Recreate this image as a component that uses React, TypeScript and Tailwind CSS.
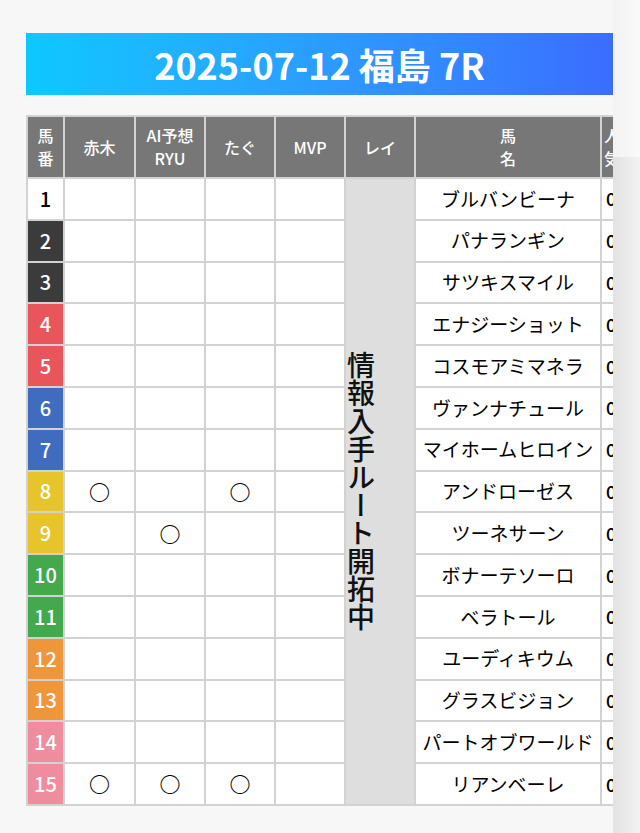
import type { ReactNode } from 'react';

type Horse = {
  no: number;
  name: string;
  akagi?: boolean;
  ryu?: boolean;
  tagu?: boolean;
};

const horses: Horse[] = [
  { no: 1, name: 'ブルバンビーナ' },
  { no: 2, name: 'パナランギン' },
  { no: 3, name: 'サツキスマイル' },
  { no: 4, name: 'エナジーショット' },
  { no: 5, name: 'コスモアミマネラ' },
  { no: 6, name: 'ヴァンナチュール' },
  { no: 7, name: 'マイホームヒロイン' },
  { no: 8, name: 'アンドローゼス', akagi: true, tagu: true },
  { no: 9, name: 'ツーネサーン', ryu: true },
  { no: 10, name: 'ボナーテソーロ' },
  { no: 11, name: 'ベラトール' },
  { no: 12, name: 'ユーディキウム' },
  { no: 13, name: 'グラスビジョン' },
  { no: 14, name: 'パートオブワールド' },
  { no: 15, name: 'リアンベーレ', akagi: true, ryu: true, tagu: true },
];

// 枠番の色 (1枠〜8枠)
function frameClass(no: number): string {
  if (no === 1) return 'bg-white text-black';
  if (no <= 3) return 'bg-[#3b3b3b] text-white';
  if (no <= 5) return 'bg-[#e8555a] text-white';
  if (no <= 7) return 'bg-[#3f6cbf] text-white';
  if (no <= 9) return 'bg-[#e8c42c] text-white';
  if (no <= 11) return 'bg-[#44a94c] text-white';
  if (no <= 13) return 'bg-[#ef953a] text-white';
  return 'bg-[#ef8c9d] text-white';
}

const th = 'border-2 border-[#d2d2d2] bg-[#777777] px-0 text-center align-middle text-[16px] font-medium leading-[23px] text-white';
const td = 'border-2 border-[#d2d2d2] bg-white p-0 text-center align-middle text-[18px] text-black';

function Mark({ on }: { on?: boolean }): ReactNode {
  return on ? <span className="text-[21px] font-bold">○</span> : null;
}

export default function App(): ReactNode {
  return (
    <div className="flex min-h-[833px] bg-[#f7f7f7] font-['Noto_Sans_CJK_JP','Noto_Sans',sans-serif]">
      <div className="w-[613px] shrink-0 pl-[26px] pt-[33px]">
        <h1 className="flex h-[62px] items-center justify-center bg-gradient-to-r from-[#0cc8ff] to-[#3b6cff] text-[36px] font-semibold text-white">
          2025-07-12 福島 7R
        </h1>
        <div className="mt-[20px] w-[587px] overflow-hidden">
          <table className="w-[644px] table-fixed border-collapse">
            <colgroup>
              <col className="w-[37px]" />
              <col className="w-[71px]" />
              <col className="w-[70px]" />
              <col className="w-[70px]" />
              <col className="w-[70px]" />
              <col className="w-[70px]" />
              <col className="w-[186px]" />
              <col className="w-[70px]" />
            </colgroup>
            <thead>
              <tr className="h-[62px]">
                <th className={th}>
                  馬<br />番
                </th>
                <th className={th}>赤木</th>
                <th className={th}>
                  AI予想
                  <br />
                  RYU
                </th>
                <th className={th}>たぐ</th>
                <th className={th}>MVP</th>
                <th className={th}>レイ</th>
                <th className={th}>
                  馬<br />名
                </th>
                <th className={`${th} pl-[2px] text-left`}>
                  人<br />気
                </th>
              </tr>
            </thead>
            <tbody>
              {horses.map((h, i) => (
                <tr key={h.no} className="h-[41.8px]">
                  <td className={`border-2 border-[#d2d2d2] p-0 text-center align-middle text-[20px] font-medium ${frameClass(h.no)}`}>
                    {h.no}
                  </td>
                  <td className={td}>
                    <Mark on={h.akagi} />
                  </td>
                  <td className={td}>
                    <Mark on={h.ryu} />
                  </td>
                  <td className={td}>
                    <Mark on={h.tagu} />
                  </td>
                  <td className={td} />
                  {i === 0 && (
                    <td rowSpan={15} className="border-2 border-[#d2d2d2] bg-[#dedede] p-0 text-center align-middle">
                      <div className="mx-auto text-[28px] font-medium leading-[30px] text-[#111] [writing-mode:vertical-rl]">
                        情報入手ルート開拓中
                      </div>
                    </td>
                  )}
                  <td className={`${td} whitespace-nowrap text-[19px]`}>{h.name}</td>
                  <td className={`${td} pl-[4px] text-left font-medium`}>0.0</td>
                </tr>
              ))}
            </tbody>
          </table>
        </div>
      </div>
      <div className="flex flex-1 flex-col">
        <div className="h-[157px] bg-gradient-to-r from-[#f2f2f2] to-[#fafafa]" />
        <div className="flex-1 bg-gradient-to-r from-[#e2e2e2] to-[#f3f3f3]" />
      </div>
    </div>
  );
}
